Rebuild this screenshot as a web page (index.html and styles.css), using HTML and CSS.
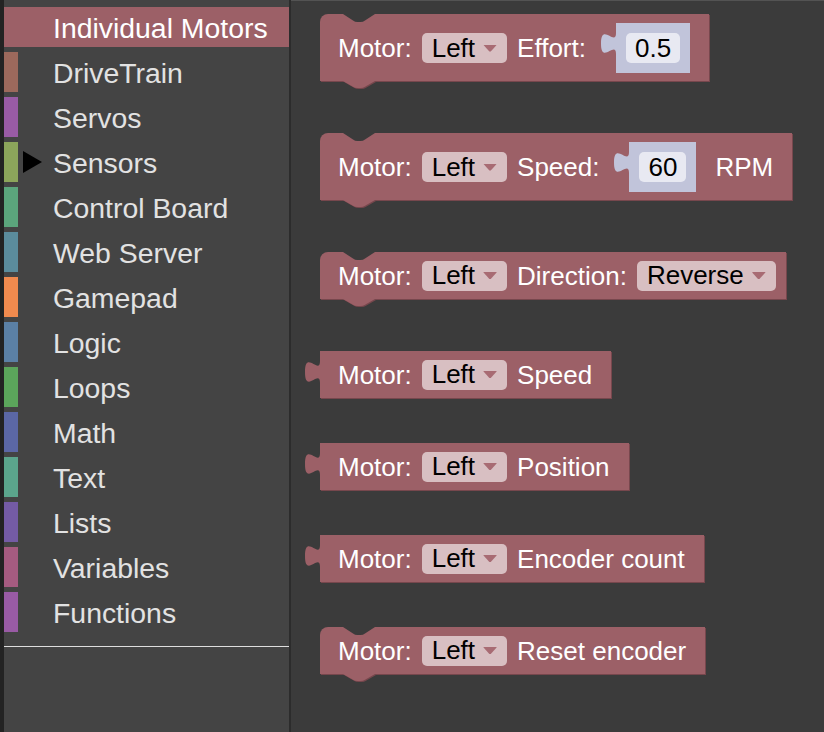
FILE: index.html
```html
<!DOCTYPE html>
<html lang="en">
<head>
    <meta charset="UTF-8">
    <meta name="viewport" content="width=device-width, initial-scale=1.0">
    <title>Individual Motors</title>
    <link rel="stylesheet" href="styles.css">
</head>
<body>

<div class="workspace">
    <div class="edge"></div>

    <nav class="toolbox">
        <div class="cat cat-motors selected"><span class="bar"></span><span class="slot"></span><span class="name">Individual Motors</span></div>
        <div class="cat cat-drivetrain"><span class="bar"></span><span class="slot"></span><span class="name">DriveTrain</span></div>
        <div class="cat cat-servos"><span class="bar"></span><span class="slot"></span><span class="name">Servos</span></div>
        <div class="cat cat-sensors"><span class="bar"></span><span class="slot"><i class="expand"></i></span><span class="name">Sensors</span></div>
        <div class="cat cat-board"><span class="bar"></span><span class="slot"></span><span class="name">Control Board</span></div>
        <div class="cat cat-web"><span class="bar"></span><span class="slot"></span><span class="name">Web Server</span></div>
        <div class="cat cat-gamepad"><span class="bar"></span><span class="slot"></span><span class="name">Gamepad</span></div>
        <div class="cat cat-logic"><span class="bar"></span><span class="slot"></span><span class="name">Logic</span></div>
        <div class="cat cat-loops"><span class="bar"></span><span class="slot"></span><span class="name">Loops</span></div>
        <div class="cat cat-math"><span class="bar"></span><span class="slot"></span><span class="name">Math</span></div>
        <div class="cat cat-text"><span class="bar"></span><span class="slot"></span><span class="name">Text</span></div>
        <div class="cat cat-lists"><span class="bar"></span><span class="slot"></span><span class="name">Lists</span></div>
        <div class="cat cat-variables"><span class="bar"></span><span class="slot"></span><span class="name">Variables</span></div>
        <div class="cat cat-functions"><span class="bar"></span><span class="slot"></span><span class="name">Functions</span></div>
        <hr class="sep">
    </nav>

    <div class="divider"></div>

    <div class="flyout">
        <!-- set effort -->
        <div class="block stmt tall">
            <svg class="notch" viewBox="0 0 32 8"><path d="M0 0 L10 6.5 Q12 8 14.5 8 L17.5 8 Q20 8 22 6.5 L32 0 Z"/></svg>
            <span class="label">Motor:</span>
            <span class="dropdown">Left<i class="arrow"></i></span>
            <span class="label">Effort:</span>
            <span class="shadow">
                <svg class="tab" viewBox="0 0 15 22" preserveAspectRatio="none"><path d="M15 0 C15 14.7 0 -11.7 0 11 C0 33.7 15 7.3 15 22 Z"/></svg>
                <span class="field">0.5</span>
            </span>
            <svg class="next" viewBox="0 0 32 8" preserveAspectRatio="none"><path d="M0 0 L10 6.5 Q12 8 14.5 8 L17.5 8 Q20 8 22 6.5 L32 0 Z"/></svg>
        </div>

        <!-- set speed -->
        <div class="block stmt tall">
            <svg class="notch" viewBox="0 0 32 8"><path d="M0 0 L10 6.5 Q12 8 14.5 8 L17.5 8 Q20 8 22 6.5 L32 0 Z"/></svg>
            <span class="label">Motor:</span>
            <span class="dropdown">Left<i class="arrow"></i></span>
            <span class="label">Speed:</span>
            <span class="shadow before-label">
                <svg class="tab" viewBox="0 0 15 22" preserveAspectRatio="none"><path d="M15 0 C15 14.7 0 -11.7 0 11 C0 33.7 15 7.3 15 22 Z"/></svg>
                <span class="field">60</span>
            </span>
            <span class="label">RPM</span>
            <svg class="next" viewBox="0 0 32 8" preserveAspectRatio="none"><path d="M0 0 L10 6.5 Q12 8 14.5 8 L17.5 8 Q20 8 22 6.5 L32 0 Z"/></svg>
        </div>

        <!-- set direction -->
        <div class="block stmt ends-dropdown">
            <svg class="notch" viewBox="0 0 32 8"><path d="M0 0 L10 6.5 Q12 8 14.5 8 L17.5 8 Q20 8 22 6.5 L32 0 Z"/></svg>
            <span class="label">Motor:</span>
            <span class="dropdown">Left<i class="arrow"></i></span>
            <span class="label">Direction:</span>
            <span class="dropdown">Reverse<i class="arrow"></i></span>
            <svg class="next" viewBox="0 0 32 8" preserveAspectRatio="none"><path d="M0 0 L10 6.5 Q12 8 14.5 8 L17.5 8 Q20 8 22 6.5 L32 0 Z"/></svg>
        </div>

        <!-- getters -->
        <div class="block output">
            <svg class="tab" viewBox="0 0 15 22" preserveAspectRatio="none"><path d="M15 0 C15 14.7 0 -11.7 0 11 C0 33.7 15 7.3 15 22 Z"/></svg>
            <span class="label">Motor:</span>
            <span class="dropdown">Left<i class="arrow"></i></span>
            <span class="label">Speed</span>
        </div>

        <div class="block output">
            <svg class="tab" viewBox="0 0 15 22" preserveAspectRatio="none"><path d="M15 0 C15 14.7 0 -11.7 0 11 C0 33.7 15 7.3 15 22 Z"/></svg>
            <span class="label">Motor:</span>
            <span class="dropdown">Left<i class="arrow"></i></span>
            <span class="label">Position</span>
        </div>

        <div class="block output">
            <svg class="tab" viewBox="0 0 15 22" preserveAspectRatio="none"><path d="M15 0 C15 14.7 0 -11.7 0 11 C0 33.7 15 7.3 15 22 Z"/></svg>
            <span class="label">Motor:</span>
            <span class="dropdown">Left<i class="arrow"></i></span>
            <span class="label">Encoder count</span>
        </div>

        <!-- reset -->
        <div class="block stmt">
            <svg class="notch" viewBox="0 0 32 8"><path d="M0 0 L10 6.5 Q12 8 14.5 8 L17.5 8 Q20 8 22 6.5 L32 0 Z"/></svg>
            <span class="label">Motor:</span>
            <span class="dropdown">Left<i class="arrow"></i></span>
            <span class="label">Reset encoder</span>
            <svg class="next" viewBox="0 0 32 8" preserveAspectRatio="none"><path d="M0 0 L10 6.5 Q12 8 14.5 8 L17.5 8 Q20 8 22 6.5 L32 0 Z"/></svg>
        </div>
    </div>
</div>

</body>
</html>
```

FILE: styles.css
```css
html, body {
    margin: 0;
    padding: 0;
    height: 100%;
}

body {
    font-family: "Liberation Sans", Arial, sans-serif;
    background-color: #3b3b3b;
    overflow: hidden;
}

.workspace {
    display: flex;
    height: 100vh;
}

.edge {
    width: 4px;
    background-color: #232323;
}

/* category list */

.toolbox {
    width: 285px;
    background-color: #444444;
    padding-top: 7px;
    box-sizing: border-box;
    display: flex;
    flex-direction: column;
    gap: 5px;
}

.cat {
    display: flex;
    align-items: center;
    height: 40px;
    color: #e2e2e2;
    font-size: 28.4px;
}

.cat .bar {
    width: 14px;
    height: 40px;
    background-color: var(--cat);
}

.cat .slot {
    width: 35px;
    height: 40px;
    display: flex;
    align-items: center;
}

.cat .name {
    white-space: nowrap;
    line-height: 40px;
    padding-top: 1px;
}

.cat.selected {
    background-color: var(--cat);
    color: #ffffff;
}

.expand {
    display: block;
    margin-left: 5px;
    width: 0;
    height: 0;
    border-top: 11.5px solid transparent;
    border-bottom: 11.5px solid transparent;
    border-left: 19px solid #000000;
}

.cat-motors { --cat: #9c6067; }
.cat-drivetrain { --cat: #9c695c; }
.cat-servos { --cat: #995ba5; }
.cat-sensors { --cat: #8ca55b; }
.cat-board { --cat: #5ba57c; }
.cat-web { --cat: #5b8c9c; }
.cat-gamepad { --cat: #f08a4e; }
.cat-logic { --cat: #5b80a5; }
.cat-loops { --cat: #5ba55b; }
.cat-math { --cat: #5b67a5; }
.cat-text { --cat: #5ba58c; }
.cat-lists { --cat: #745ba5; }
.cat-variables { --cat: #a55b80; }
.cat-functions { --cat: #995ba5; }

.sep {
    margin: 9px 0 0;
    border: none;
    border-top: 1px solid #dedede;
}

.divider {
    width: 2px;
    background-color: #2c2c2c;
}

/* block flyout */

.flyout {
    flex: 1;
    background-color: #3b3b3b;
    border-top: 1px solid #535353;
    padding: 13px 0 0 29px;
    display: flex;
    flex-direction: column;
    align-items: flex-start;
    gap: 45px;
}

.block {
    position: relative;
    display: inline-flex;
    align-items: center;
    gap: 10px;
    padding: 8.5px 19px 8.5px 18px;
    background-color: #9c6067;
    box-shadow: 1px 1px 0 #77474d;
    color: #ffffff;
    font-size: 26px;
    white-space: nowrap;
}

.block.stmt {
    border-radius: 8px 0 0 0;
    margin-bottom: 7px;
}

.block.tall {
    padding-top: 9px;
    padding-bottom: 8px;
}

.block.ends-dropdown {
    padding-right: 10px;
}

.block svg {
    position: absolute;
    overflow: visible;
}

.notch {
    top: 0;
    left: 23px;
    width: 32px;
    height: 8px;
    fill: #3b3b3b;
}

.next {
    top: 100%;
    left: 23px;
    width: 32px;
    height: 7px;
    fill: #9c6067;
    filter: drop-shadow(1px 1px 0 #77474d);
}

.block > .tab {
    left: -15px;
    top: 10px;
    width: 15px;
    height: 22px;
    fill: #9c6067;
}

.label {
    line-height: 30px;
}

.dropdown {
    display: inline-flex;
    align-items: center;
    height: 30px;
    padding: 0 10px;
    border-radius: 5px;
    background-color: #d8bfc2;
    color: #000000;
}

.arrow {
    display: block;
    margin-left: 8px;
    width: 14px;
    height: 7px;
    background-color: #a86b73;
    clip-path: polygon(0 0, 100% 0, 55% 100%, 45% 100%);
    border-radius: 1px;
}

.shadow {
    position: relative;
    display: flex;
    margin-left: 20px;
    padding: 10px;
    background-color: #c1c4da;
}

.shadow.before-label {
    margin-right: 9px;
}

.shadow .tab {
    left: -15px;
    top: 10px;
    width: 15px;
    height: 21px;
    fill: #c1c4da;
}

.field {
    height: 30px;
    line-height: 30px;
    padding: 0 9px;
    border-radius: 5px;
    background-color: #e8e9f2;
    color: #000000;
}
```
